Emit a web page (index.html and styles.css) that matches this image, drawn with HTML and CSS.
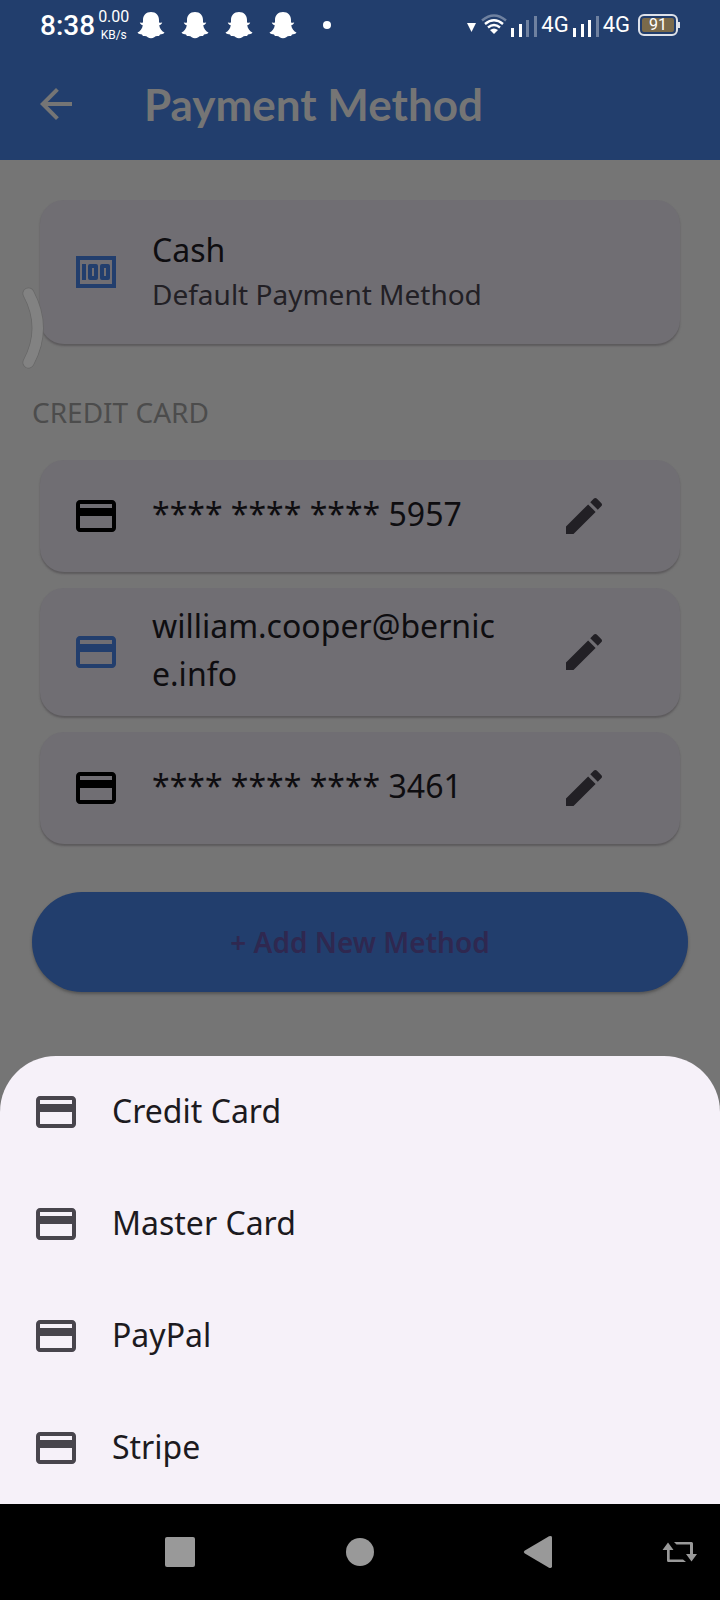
FILE: index.html
```html
<!DOCTYPE html>
<html lang="en">
<head>
<meta charset="utf-8">
<meta name="viewport" content="width=device-width, initial-scale=1">
<title>Payment Method</title>
<link rel="stylesheet" href="styles.css">
</head>
<body>
<svg class="sprite" aria-hidden="true">
  <symbol id="card" viewBox="0 0 24 24"><path d="M20 4H4c-1.110 0-1.990.89-1.990 2L2 18c0 1.110.89 2 2 2h16c1.110 0 2-.89 2-2V6c0-1.110-.89-2-2-2zm0 14H4v-6h16v6zm0-10H4V6h16v2z"/></symbol>
  <symbol id="edit" viewBox="0 0 24 24"><path d="M3 17.250V21h3.750L17.810 9.940l-3.750-3.750L3 17.250zM20.710 7.040c.39-.39.39-1.020 0-1.410l-2.340-2.340c-.39-.39-1.020-.39-1.410 0l-1.830 1.830 3.750 3.750 1.830-1.830z"/></symbol>
  <symbol id="ghost" viewBox="0 0 28 28"><path d="M14 1c-5 0-8 3.500-8 8v2.500c-1 .4-2.200-.2-3.200-.1.3 1.600 1.700 2.300 3 2.900C5.300 18 3 20.500.5 21.500c.8 1.800 3 1.700 4.500 2 .5 1 .5 1.700 2.500 1.500 2.500-.2 3.700 2.300 6.500 2.300s4-2.500 6.500-2.300c2 .2 2-.5 2.500-1.500 1.500-.3 3.700-.2 4.500-2-2.500-1-4.800-3.500-5.300-7.200 1.300-.6 2.700-1.300 3-2.900-1-.1-2.200.5-3.200.1V9c0-4.500-3-8-8-8z"/></symbol>
</svg>
<div class="screen">
  <header class="top">
    <div class="status">
      <span class="time">8:38</span>
      <span class="speed"><span class="rate">0.00</span><span class="unit">KB/s</span></span>
      <span class="ghosts">
        <svg><use href="#ghost"/></svg><svg><use href="#ghost"/></svg><svg><use href="#ghost"/></svg><svg><use href="#ghost"/></svg>
      </span>
      <span class="dot"></span>
      <span class="signals">
        <svg class="caret" viewBox="0 0 10 24"><path d="M0 10h9l-4.500 9z"/></svg>
        <svg class="wifi" viewBox="0 0 26 24"><g fill="none" stroke="#fff" stroke-width="2.400"><path d="M1 7.500Q13-2.500 25 7.500" opacity=".35"/><path d="M4 11Q13 3.500 22 11"/><path d="M7 14.500Q13 9.500 19 14.500"/></g><path d="M9 17q4-3 8 0l-4 4z"/></svg>
        <svg class="bars" viewBox="0 0 26 24"><path d="M0 15h3v9H0zM8 11h3v13H8z"/><path d="M15 7h3v17h-3zM23 3h3v21h-3z" opacity=".35"/></svg>
        <span class="net">4G</span>
        <svg class="bars" viewBox="0 0 26 24"><path d="M0 15h3v9H0zM8 11h3v13H8zM15 7h3v17h-3z"/><path d="M23 3h3v21h-3z" opacity=".35"/></svg>
        <span class="net">4G</span>
        <span class="battery">91</span>
      </span>
    </div>
    <div class="appbar">
      <button class="back" aria-label="Back"><svg viewBox="0 0 24 24"><path d="M20 11H7.830l5.590-5.590L12 4l-8 8 8 8 1.410-1.410L7.830 13H20v-2z"/></svg></button>
      <h1 class="title">Payment Method</h1>
    </div>
  </header>

  <main class="content">
    <section class="tile tile-cash">
      <svg class="icon blue" viewBox="0 0 24 24"><path fill-rule="evenodd" d="M2 4h20v16H2zM4 6v12h16V6zM5 8h2v8H5zM9 8h3q1 0 1 1v6q0 1-1 1H9q-1 0-1-1V9q0-1 1-1zM10 10v4h1v-4zM15 8h3q1 0 1 1v6q0 1-1 1h-3q-1 0-1-1V9q0-1 1-1zM16 10v4h1v-4z"/></svg>
      <div class="label"><div class="name">Cash</div><div class="note">Default Payment Method</div></div>
      <svg class="edge" viewBox="0 0 22 84"><path d="M6.500 7.500Q25 42 6.500 76.500" fill="none" stroke="#676767" stroke-width="12" stroke-linecap="round"/><path d="M6.500 7.500Q25 42 6.500 76.500" fill="none" stroke="#828282" stroke-width="10.500" stroke-linecap="round"/></svg>
    </section>
    <h2 class="section">CREDIT CARD</h2>
    <ul class="cards">
      <li class="tile">
        <svg class="icon black"><use href="#card"/></svg><div class="label name">**** **** **** 5957</div>
        <button class="edit" aria-label="Edit card 5957"><svg><use href="#edit"/></svg></button>
      </li>
      <li class="tile">
        <svg class="icon blue"><use href="#card"/></svg><div class="label name">william.cooper@bernic<wbr>e.info</div>
        <button class="edit" aria-label="Edit william.cooper"><svg><use href="#edit"/></svg></button>
      </li>
      <li class="tile">
        <svg class="icon black"><use href="#card"/></svg><div class="label name">**** **** **** 3461</div>
        <button class="edit" aria-label="Edit card 3461"><svg><use href="#edit"/></svg></button>
      </li>
    </ul>
    <button class="add">+ Add New Method</button>
  </main>

  <div class="sheet" role="menu">
    <button class="option" role="menuitem"><svg class="icon"><use href="#card"/></svg><span class="label">Credit Card</span></button>
    <button class="option" role="menuitem"><svg class="icon"><use href="#card"/></svg><span class="label">Master Card</span></button>
    <button class="option" role="menuitem"><svg class="icon"><use href="#card"/></svg><span class="label">PayPal</span></button>
    <button class="option" role="menuitem"><svg class="icon"><use href="#card"/></svg><span class="label">Stripe</span></button>
  </div>

  <nav class="nav">
    <span></span>
    <button aria-label="Recents"><svg viewBox="0 0 36 36"><rect x="3" y="3" width="30" height="30" rx="2"/></svg></button>
    <button aria-label="Home"><svg viewBox="0 0 36 36"><circle cx="18" cy="18" r="14"/></svg></button>
    <button aria-label="Back"><svg viewBox="0 0 36 36"><path d="M2.500 16.800Q1 18 2.500 19.200L27 33.700Q30 34.500 30 32.500V3.500Q30 1.500 27 2.300z"/></svg></button>
    <button class="rotate" aria-label="Rotate"><svg viewBox="0 0 36 36"><path d="M6 8.500 11.500 16H7.700v9.500H21L24 28H6.500Q5 28 5 26.500V16H.5zM12 8h17.500q1.500 0 1.500 1.500V20h4l-5.500 7.500L24 20h4v-9.500H14.500z"/></svg></button>
  </nav>
</div>
</body>
</html>
```
FILE: styles.css
```css
* { box-sizing: border-box; }
body { margin: 0; background: #757575; font-family: "Noto Sans", "Open Sans", sans-serif; color: #0e0d10; }
button { border: 0; padding: 0; background: none; font: inherit; color: inherit; }
svg { display: block; fill: currentColor; flex: none; }
.sprite { position: absolute; width: 0; height: 0; }
.screen { display: flex; flex-direction: column; min-height: 100vh; }

.top { background: #223e6d; }
.status { display: flex; align-items: center; height: 48px; padding: 2px 42px 0 40px; color: #fff; font-family: Roboto, sans-serif; }
.time { font-size: 28px; font-weight: 500; }
.speed { display: flex; flex-direction: column; align-items: center; margin-left: 3px; }
.rate { font-size: 16px; line-height: 20px; }
.unit { font-size: 12px; line-height: 16px; }
.ghosts { display: flex; gap: 16px; margin-left: 8px; }
.ghosts svg { width: 28px; height: 28px; }
.dot { width: 8px; height: 8px; border-radius: 50%; background: #fff; margin-left: 26px; }
.signals { display: flex; align-items: center; gap: 4px; margin-left: auto; }
.caret { width: 10px; height: 24px; }
.wifi { width: 26px; height: 24px; }
.bars { width: 26px; height: 24px; }
.net { font-size: 22px; line-height: 24px; }
.battery { position: relative; width: 40px; height: 22px; margin-left: 4px; border: 2px solid #dde1ea; border-radius: 6px; box-shadow: inset 0 0 0 2px #223e6d; background: #7a6a4b; font-size: 16px; line-height: 18px; text-align: center; }
.battery::after { content: ""; position: absolute; left: 38px; top: 6px; width: 2px; height: 6px; background: #dde1ea; }

.appbar { display: flex; align-items: center; height: 112px; padding: 0 32px; gap: 64px; color: #757575; }
.back svg { width: 48px; height: 48px; }
.title { margin: 0; font-family: Lato, sans-serif; font-size: 44px; line-height: 60px; font-weight: 700; }

.content { flex: 1; padding: 40px 32px 64px; }
.tile { position: relative; display: flex; align-items: center; gap: 32px; min-height: 112px; margin: 0 8px; padding: 0 48px 0 32px; border-radius: 24px; background: #706e73; box-shadow: 0 2px 2px #5c5a5c; }
.tile-cash { min-height: 144px; }
.icon { width: 48px; height: 48px; }
.blue { color: #223e6d; }
.black { color: #000; }
.label { flex: 1; min-width: 0; padding-bottom: 4px; }
.name { font-size: 32px; line-height: 48px; font-weight: 400; }
.note { font-size: 28px; line-height: 40px; font-weight: 400; color: #222025; }
.edge { position: absolute; left: -18px; top: 86px; width: 22px; height: 84px; }
.section { margin: 48px 0 28px; font-size: 28px; line-height: 40px; font-weight: 400; color: #4c4c4c; }
.cards { display: flex; flex-direction: column; gap: 16px; margin: 0; padding: 0; list-style: none; }
.cards .tile { padding-top: 14px; padding-bottom: 14px; }
.edit { width: 96px; height: 96px; margin: -16px 0; display: grid; place-items: center; color: #222025; }
.edit svg { width: 48px; height: 48px; }
.add { display: block; width: 100%; height: 100px; margin-top: 48px; border-radius: 50px; background: #223e6d; color: #2f2850; font-size: 28px; font-weight: 600; box-shadow: 0 2px 3px #555; }

.sheet { display: flex; flex-direction: column; background: #f6f1f9; border-radius: 56px 56px 0 0; color: #1c1a20; }
.option { display: flex; align-items: center; gap: 32px; height: 112px; padding: 0 32px; font-size: 32px; font-weight: 400; text-align: left; }
.option .icon { color: #48454d; }

.nav { display: grid; grid-template-columns: 1fr 2fr 2fr 2fr 1fr; align-items: center; height: 96px; background: #000; color: #999; }
.nav button { display: grid; place-items: center; }
.nav svg { width: 36px; height: 36px; }
.nav .rotate { padding-left: 10px; }
```
